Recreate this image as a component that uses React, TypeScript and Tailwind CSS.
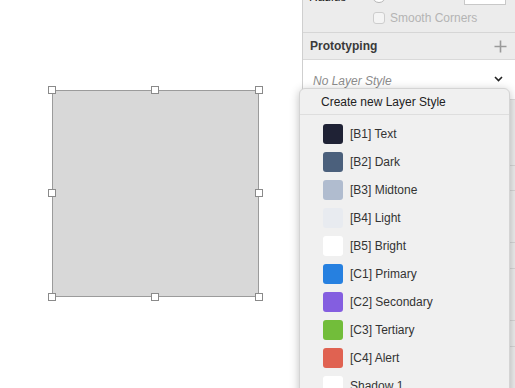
import React from 'react'

type Style = { name: string; color: string }

const styles: Style[] = [
  { name: '[B1] Text', color: '#1f2235' },
  { name: '[B2] Dark', color: '#4b607c' },
  { name: '[B3] Midtone', color: '#b0bccf' },
  { name: '[B4] Light', color: '#e8ebf0' },
  { name: '[B5] Bright', color: '#ffffff' },
  { name: '[C1] Primary', color: '#2680e0' },
  { name: '[C2] Secondary', color: '#845ee0' },
  { name: '[C3] Tertiary', color: '#72bd3a' },
  { name: '[C4] Alert', color: '#e06251' },
  { name: 'Shadow 1', color: '#ffffff' },
]

function Handle({ className }: { className: string }) {
  return <div className={`absolute w-[8px] h-[8px] bg-white border border-[#8a8a8a] ${className}`} />
}

export default function App() {
  return (
    <div className="relative w-[515px] h-[388px] overflow-hidden bg-white flex font-['Liberation_Sans',sans-serif]">
      {/* canvas */}
      <div className="w-[302px] shrink-0 bg-white pt-[90px] pl-[52px]">
        <div className="relative w-[207px] h-[207px] bg-[#d8d8d8] border border-[#9b9b9b]">
          <Handle className="-left-[5px] -top-[5px]" />
          <Handle className="left-[98px] -top-[5px]" />
          <Handle className="-right-[5px] -top-[5px]" />
          <Handle className="-left-[5px] top-[98px]" />
          <Handle className="-right-[5px] top-[98px]" />
          <Handle className="-left-[5px] -bottom-[5px]" />
          <Handle className="left-[98px] -bottom-[5px]" />
          <Handle className="-right-[5px] -bottom-[5px]" />
        </div>
      </div>

      {/* inspector */}
      <div className="flex-1 flex flex-col border-l border-[#cfcfcf] bg-[#ececec]">
        <div className="h-[33px] border-b border-[#d6d6d6] overflow-hidden">
          <div className="flex items-start -mt-[9px] h-[14px]">
            <span className="ml-[6px] text-[12px] text-[#222] leading-[12px]">Radius</span>
            <div className="ml-[26px] -mt-[2px] w-[14px] h-[14px] rounded-full border border-[#b5b5b5] bg-white" />
            <div className="ml-auto mr-[9px] -mt-[6px] w-[42px] h-[20px] bg-white border border-[#c8c8c8]" />
          </div>
          <div className="flex items-center mt-[4px] ml-[70px] gap-[5px]">
            <div className="w-[12px] h-[12px] rounded-[3px] border border-[#cdcdcd] bg-[#f4f4f4]" />
            <span className="text-[12px] text-[#b4b4b4]">Smooth Corners</span>
          </div>
        </div>
        <div className="h-[27px] flex items-center justify-between pl-[7px] pr-[8px] border-b border-[#d9d9d9]">
          <span className="text-[12px] font-bold text-[#3a3a3a]">Prototyping</span>
          <svg width="13" height="13" viewBox="0 0 13 13" className="text-[#9a9a9a]">
            <path d="M6.5 0.5v12M0.5 6.5h12" stroke="currentColor" strokeWidth="1.6" />
          </svg>
        </div>
        <div className="h-[40px] bg-white flex items-start justify-between pl-[10px] pr-[12px] pt-[12px] border-b border-[#dcdcdc]">
          <span className="text-[12px] italic text-[#8c8c8c]">No Layer Style</span>
          <svg width="9" height="6" viewBox="0 0 9 6" className="mt-[4px] text-[#222]">
            <path d="M1 1l3.5 3.5L8 1" fill="none" stroke="currentColor" strokeWidth="1.6" />
          </svg>
        </div>
        <div className="h-[66px] border-b border-[#d6d6d6]" />
        <div className="h-[25px] border-b border-[#d6d6d6]" />
        <div className="h-[52px] border-b border-[#d6d6d6]" />
        <div className="h-[26px] border-b border-[#d6d6d6]" />
        <div className="h-[52px] border-b border-[#d6d6d6]" />
        <div className="h-[26px] border-b border-[#d6d6d6]" />
      </div>

      {/* layer style menu */}
      <div className="absolute left-[299px] top-[88px] w-[211px] h-[320px] bg-[#f0f0f0] rounded-t-[6px] border border-[#d4d4d4] shadow-[0_2px_10px_rgba(0,0,0,0.25)]">
        <div className="h-[26px] flex items-center pl-[21px] border-b border-[#dedede] text-[12px] text-[#222]">
          Create new Layer Style
        </div>
        <div className="pt-[5px]">
          {styles.map((s) => (
            <div key={s.name} className="h-[28px] flex items-center pl-[23px] gap-[7px]">
              <div
                className="w-[20px] h-[20px] rounded-[3px] shrink-0"
                style={{ backgroundColor: s.color }}
              />
              <span className="text-[12px] text-[#333]">{s.name}</span>
            </div>
          ))}
        </div>
      </div>
    </div>
  )
}
